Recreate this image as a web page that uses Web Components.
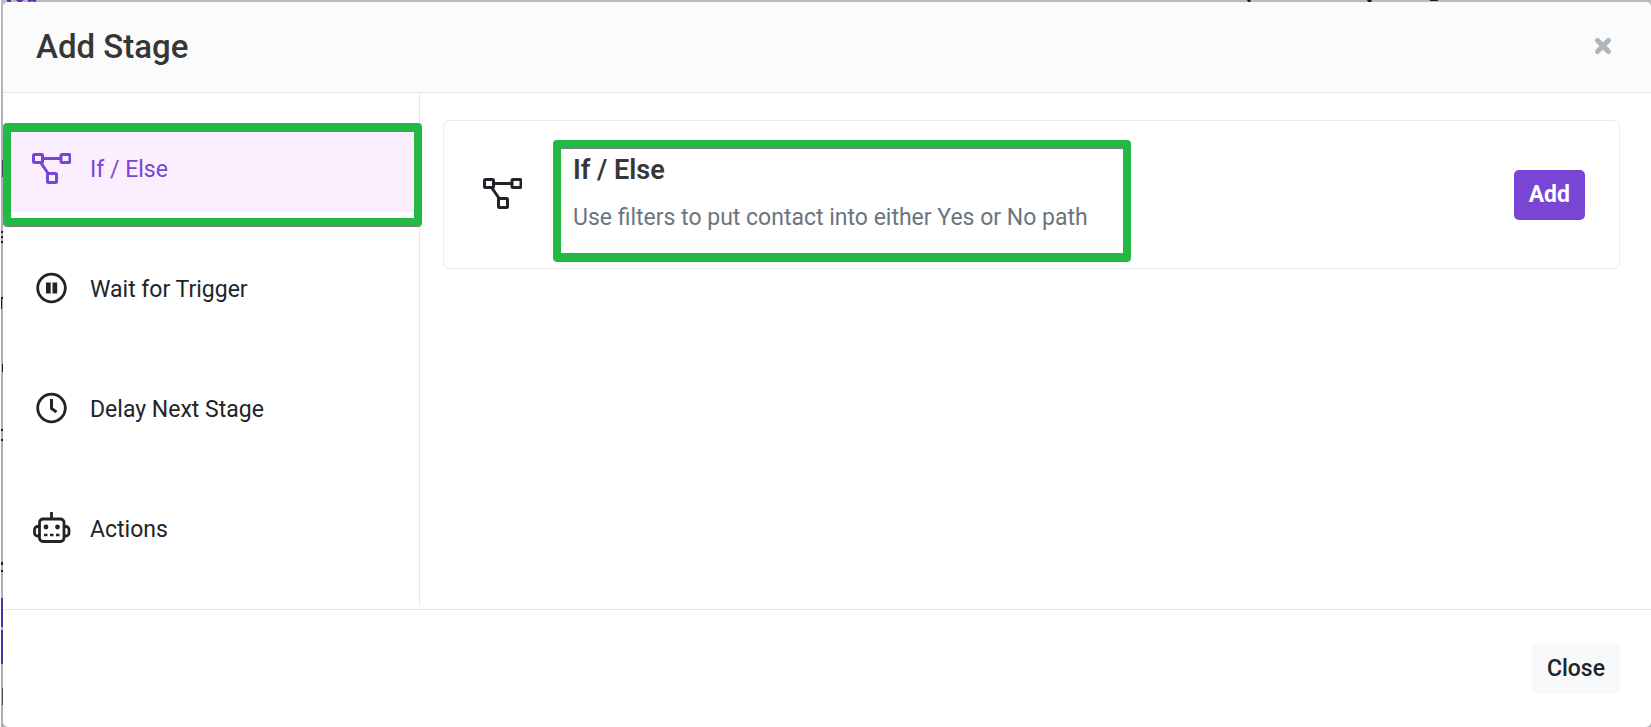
<!DOCTYPE html>
<html lang="en">
<head>
<meta charset="utf-8">
<meta name="viewport" content="width=device-width, initial-scale=1">
<title>Add Stage</title>
<style>
  body {
    margin: 0;
    font-family: Roboto, "Liberation Sans", sans-serif;
    font-size: 23px;
    line-height: 36px;
    color: #212529;
  }
</style>
</head>
<body>
<stage-dialog heading="Add Stage">
  <stage-item slot="nav" icon="branch" active>If / Else</stage-item>
  <stage-item slot="nav" icon="pause">Wait for Trigger</stage-item>
  <stage-item slot="nav" icon="clock">Delay Next Stage</stage-item>
  <stage-item slot="nav" icon="robot">Actions</stage-item>

  <stage-card icon="branch">
    <span slot="title">If / Else</span>
    <span slot="text">Use filters to put contact into either Yes or No path</span>
    <action-button slot="action" kind="primary">Add</action-button>
  </stage-card>

  <action-button slot="footer" kind="light">Close</action-button>
</stage-dialog>

<script>
const ICONS = {
  branch: `
    <g fill="none" stroke="currentColor" stroke-width="3">
      <rect x="2.5" y="4.5" width="9" height="8" rx="1"/>
      <rect x="30" y="4.5" width="9" height="8" rx="1"/>
      <rect x="16.5" y="23.5" width="9" height="9" rx="1"/>
      <path d="M12 8.500h17.500M10 13l7.500 11"/>
    </g>`,
  pause: `
    <circle cx="20.5" cy="18" r="13.8" fill="none" stroke="currentColor" stroke-width="2.800"/>
    <path fill="currentColor" d="M15 12.500h4.700v11h-4.700zM21.500 12.500h4.700v11h-4.700z"/>`,
  clock: `
    <g fill="none" stroke="currentColor">
      <circle cx="20.5" cy="18" r="13.8" stroke-width="2.800"/>
      <path d="M20.500 9v9.500l5 3.500" stroke-width="3"/>
    </g>`,
  robot: `
    <g fill="none" stroke="currentColor" stroke-width="2.800">
      <path d="M20.500 2v7"/>
      <rect x="8.500" y="9" width="24.500" height="22.500" rx="3.500"/>
      <path d="M8.500 16.500h-2a3 3 0 0 0-3 3v3.500a3 3 0 0 0 3 3h2M33 16.500h2a3 3 0 0 1 3 3v3.500a3 3 0 0 1-3 3h-2"/>
      <path d="M13 25h3.500M19 25h3.500M25 25h3.500" stroke-width="2.500"/>
    </g>
    <g fill="currentColor"><circle cx="15" cy="17" r="2.400"/><circle cx="26.500" cy="17" r="2.400"/></g>`,
  close: `<path d="M14.500 13.500l11 11M25.500 13.500l-11 11" fill="none" stroke="currentColor" stroke-width="5" stroke-linecap="round"/>`,
};

class StageIcon extends HTMLElement {
  connectedCallback() {
    this.attachShadow({ mode: "open" }).innerHTML = `
      <style>
        :host { display: block; flex: none; width: 40px; height: 40px; }
        svg { display: block; width: 100%; height: 100%; }
      </style>
      <svg viewBox="0 0 40 40" aria-hidden="true">${ICONS[this.getAttribute("name")] || ""}</svg>
    `;
  }
}

// green frame drawn over whatever it wraps
class MarkFrame extends HTMLElement {
  connectedCallback() {
    this.attachShadow({ mode: "open" }).innerHTML = `
      <style>
        :host { display: block; position: relative; }
        .frame {
          position: absolute;
          inset: var(--frame-inset, 0);
          border: 8px solid #22b945;
          border-radius: 4px;
          box-shadow: 0 1px 0 #7d7d7d, inset 0 1px 0 #7d7d7d;
          pointer-events: none;
          z-index: 1;
        }
      </style>
      <slot></slot>
      <div class="frame"></div>
    `;
  }
}

class ActionButton extends HTMLElement {
  connectedCallback() {
    this.attachShadow({ mode: "open" }).innerHTML = `
      <style>
        :host { display: block; flex: none; }
        button {
          display: block;
          border: 0;
          border-radius: 5px;
          padding: 7px 15px;
          font: inherit;
          font-weight: 500;
          cursor: pointer;
        }
        .primary { background: #7845d4; color: #fff; font-weight: 700; }
        .light { background: #f8f9fb; color: #212529; }
      </style>
      <button type="button" class="${this.getAttribute("kind")}"><slot></slot></button>
    `;
  }
}

class StageItem extends HTMLElement {
  connectedCallback() {
    const active = this.hasAttribute("active");
    const button = `
      <button type="button" class="${active ? "active" : ""}">
        <stage-icon name="${this.getAttribute("icon")}"></stage-icon>
        <span><slot></slot></span>
      </button>`;
    this.attachShadow({ mode: "open" }).innerHTML = `
      <style>
        :host { display: block; }
        button {
          display: flex;
          align-items: center;
          gap: 19px;
          width: 100%;
          height: 84px;
          border: 0;
          padding: 0 28px;
          background: none;
          font: inherit;
          color: inherit;
          text-align: left;
          cursor: pointer;
        }
        .active { background: #fbefff; color: #7845d4; }
        mark-frame { --frame-inset: -5px -3px -14px 0; }
      </style>
      ${active ? `<mark-frame>${button}</mark-frame>` : button}
    `;
  }
}

class StageCard extends HTMLElement {
  connectedCallback() {
    this.attachShadow({ mode: "open" }).innerHTML = `
      <style>
        :host {
          display: flex;
          align-items: center;
          border: 1px solid #ebebeb;
          border-radius: 6px;
          padding: 19px 34px 19px 38px;
        }
        mark-frame { margin-left: 51px; --frame-inset: 0 -43px -12px -20px; }
        .copy { padding: 12px 0 13px; }
        h3 { margin: 0 0 12px; font-size: 27px; line-height: 36px; font-weight: 600; color: #363636; }
        p { margin: 0; color: #6c757d; }
        .action { margin-left: auto; }
      </style>
      <stage-icon name="${this.getAttribute("icon")}"></stage-icon>
      <mark-frame>
        <div class="copy">
          <h3><slot name="title"></slot></h3>
          <p><slot name="text"></slot></p>
        </div>
      </mark-frame>
      <div class="action"><slot name="action"></slot></div>
    `;
  }
}

class StageDialog extends HTMLElement {
  connectedCallback() {
    this.attachShadow({ mode: "open" }).innerHTML = `
      <style>
        :host {
          display: flex;
          position: relative;
          box-sizing: border-box;
          min-height: 100vh;
          padding: 2px 0 0 3px;
          background:
            linear-gradient(90deg, #fff 1px, transparent 1px),
            linear-gradient(#bbb 2px, #adaeb6 160px);
        }
        /* slivers of the page behind the dialog */
        .behind { position: absolute; top: 0; left: 0; width: 100%; height: 100%; }
        .dialog {
          position: relative;
          flex: 1;
          display: flex;
          flex-direction: column;
          border-radius: 5px;
          background: #fff;
          overflow: hidden;
        }
        header {
          display: flex;
          align-items: center;
          justify-content: space-between;
          height: 90px;
          border-bottom: 1px solid #e8e8ec;
          padding: 0 28px 0 33px;
          background: #fbfbfb;
        }
        h2 { margin: 0; font-size: 33px; line-height: 40px; font-weight: 500; color: #363636; }
        .close { border: 0; padding: 0; background: none; color: #adb5bd; cursor: pointer; }
        .main { flex: 1; display: flex; }
        nav {
          box-sizing: border-box;
          flex: none;
          width: 417px;
          margin-bottom: 3px;
          border-right: 1px solid #e8e8ec;
          padding-top: 35px;
          display: flex;
          flex-direction: column;
          gap: 36px;
        }
        main { flex: 1; min-width: 0; padding: 27px 31px 27px 23px; }
        footer {
          display: flex;
          justify-content: flex-end;
          border-top: 1px solid #e8e8e8;
          padding: 34px 31px 33px;
        }
      </style>
      <svg class="behind" aria-hidden="true">
        <path fill="#5c2db0" d="M7 0h4v2h-4zM16 0h8l-3 2h-3zM28 0h8v2h-2l-2-1-2 1h-2z"/>
        <path fill="#1c1c28" d="M1247 0h4l-1 2h-2zM1367 0h5l-1 2h-3zM1429 0h10l-2 1h-6z"/>
        <path fill="#4d30a0" d="M1 598h2v29h-2zM1 630h2v34h-2z"/>
        <path fill="#1c1c28" d="M1 231h2v2h-2zM1 236h2v2h-2zM1 241h2v2h-2zM1 297h2v2h-1v10h-1zM2 364h1v8h-1zM1 429h2v2h-2zM1 439h2v2h-2zM1 562h2v3h-2zM1 570h2v2h-2z"/>
        <path fill="#4a4a55" d="M2 160h1v17h-1zM2 688h1v17h-1z"/>
      </svg>
      <section class="dialog" role="dialog" aria-labelledby="heading">
        <header>
          <h2 id="heading">${this.getAttribute("heading")}</h2>
          <button class="close" type="button" aria-label="Close"><stage-icon name="close"></stage-icon></button>
        </header>
        <div class="main">
          <nav><slot name="nav"></slot></nav>
          <main><slot></slot></main>
        </div>
        <footer><slot name="footer"></slot></footer>
      </section>
    `;
  }
}

customElements.define("stage-icon", StageIcon);
customElements.define("mark-frame", MarkFrame);
customElements.define("action-button", ActionButton);
customElements.define("stage-item", StageItem);
customElements.define("stage-card", StageCard);
customElements.define("stage-dialog", StageDialog);
</script>
</body>
</html>
